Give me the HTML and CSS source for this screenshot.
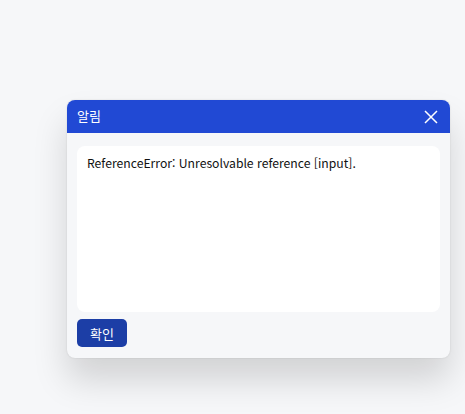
FILE: index.html
```html
<!DOCTYPE html>
<html lang="ko">
<head>
<meta charset="utf-8">
<link rel="stylesheet" href="styles.css">
</head>
<body>
<div class="dialog">
  <div class="header">
    <span class="title">알림</span>
    <svg class="close" width="14" height="14" viewBox="0 0 14 14"><path d="M1 1L13 13M13 1L1 13" stroke="#fff" stroke-width="1.5" fill="none"/></svg>
  </div>
  <div class="body">
    <div class="content">ReferenceError: Unresolvable reference [input].</div>
    <button class="ok">확인</button>
  </div>
</div>
</body>
</html>
```
FILE: styles.css
```css
html, body { margin: 0; padding: 0; }
body {
  width: 465px; height: 414px;
  background: #f6f7f9;
  font-family: "Noto Sans CJK KR", "Noto Sans", sans-serif;
  overflow: hidden;
}
.dialog {
  margin: 100px 0 0 67px;
  width: 383px;
  background: #f6f7f9;
  border-radius: 8px;
  box-shadow: 0 22px 34px rgba(0,0,0,0.15), 0 0 2px rgba(0,0,0,0.12);
  overflow: hidden;
}
.header {
  height: 33px;
  background: #2149d4;
  display: flex;
  align-items: center;
  justify-content: space-between;
  padding: 0 12px 0 10px;
}
.title { color: #fff; font-size: 13px; line-height: 16px; margin-top: -2px; }
.close { display: block; }
.body {
  padding: 13px 10px 11px;
  display: flex;
  flex-direction: column;
  align-items: flex-start;
  gap: 7px;
}
.content {
  align-self: stretch;
  height: 148px;
  background: #fff;
  border-radius: 8px;
  padding: 8px 10px 10px;
  font-size: 12.2px;
  line-height: 18px;
  color: #111;
}
.ok {
  width: 50px; height: 28px;
  background: #1c3ea6;
  color: #fff;
  border: none;
  border-radius: 5px;
  font-family: inherit;
  font-size: 13px;
  padding: 0;
}
```
